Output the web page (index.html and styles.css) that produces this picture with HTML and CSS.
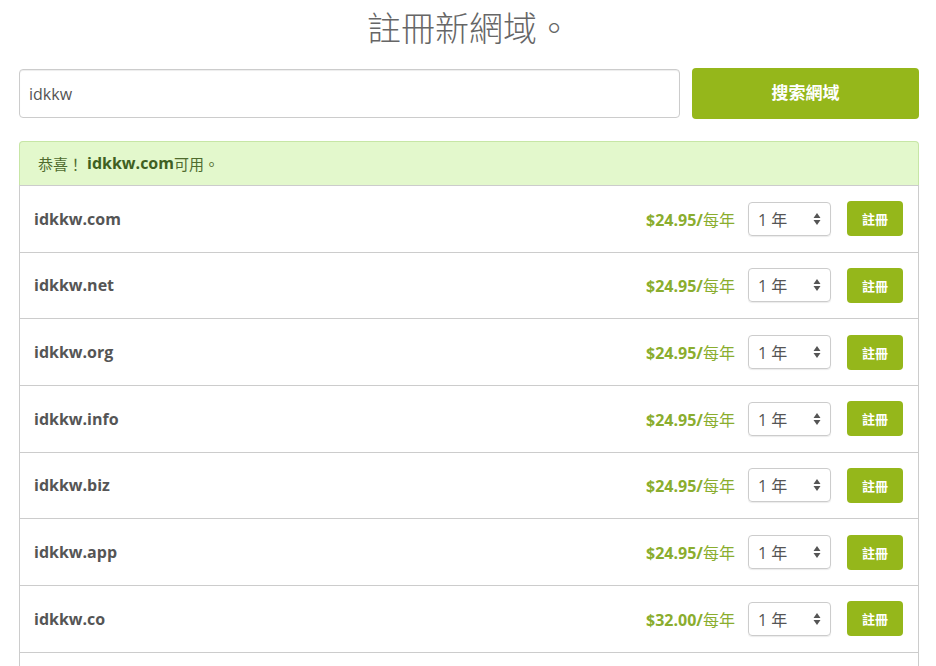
FILE: index.html
```html
<!DOCTYPE html>
<html lang="zh-Hant">
  <head>
    <meta charset="UTF-8" />
    <meta name="viewport" content="width=device-width, initial-scale=1.0" />
    <title>註冊新網域</title>
    <link rel="stylesheet" href="styles.css">
  </head>
  <body>
    <div class="container">
      <h1>註冊新網域。</h1>

      <form class="search-form">
        <input class="search-input" type="text" value="idkkw" aria-label="domain" />
        <button class="search-button" type="button">搜索網域</button>
      </form>

      <div class="alert">恭喜！ <strong>idkkw.com</strong>可用。</div>

      <div class="domain-list">
        <div class="domain-item">
          <span class="domain-name">idkkw.com</span>
          <span class="price"><b>$24.95/</b>每年</span>
          <div class="year-select"><span>1 年</span><svg viewBox="0 0 8 14" width="8" height="14"><path d="M4 1 L7.5 6 H0.5 Z M4 13 L7.5 8 H0.5 Z" fill="#555"/></svg></div>
          <button class="register-button">註冊</button>
        </div>
        <div class="domain-item">
          <span class="domain-name">idkkw.net</span>
          <span class="price"><b>$24.95/</b>每年</span>
          <div class="year-select"><span>1 年</span><svg viewBox="0 0 8 14" width="8" height="14"><path d="M4 1 L7.5 6 H0.5 Z M4 13 L7.5 8 H0.5 Z" fill="#555"/></svg></div>
          <button class="register-button">註冊</button>
        </div>
        <div class="domain-item">
          <span class="domain-name">idkkw.org</span>
          <span class="price"><b>$24.95/</b>每年</span>
          <div class="year-select"><span>1 年</span><svg viewBox="0 0 8 14" width="8" height="14"><path d="M4 1 L7.5 6 H0.5 Z M4 13 L7.5 8 H0.5 Z" fill="#555"/></svg></div>
          <button class="register-button">註冊</button>
        </div>
        <div class="domain-item">
          <span class="domain-name">idkkw.info</span>
          <span class="price"><b>$24.95/</b>每年</span>
          <div class="year-select"><span>1 年</span><svg viewBox="0 0 8 14" width="8" height="14"><path d="M4 1 L7.5 6 H0.5 Z M4 13 L7.5 8 H0.5 Z" fill="#555"/></svg></div>
          <button class="register-button">註冊</button>
        </div>
        <div class="domain-item">
          <span class="domain-name">idkkw.biz</span>
          <span class="price"><b>$24.95/</b>每年</span>
          <div class="year-select"><span>1 年</span><svg viewBox="0 0 8 14" width="8" height="14"><path d="M4 1 L7.5 6 H0.5 Z M4 13 L7.5 8 H0.5 Z" fill="#555"/></svg></div>
          <button class="register-button">註冊</button>
        </div>
        <div class="domain-item">
          <span class="domain-name">idkkw.app</span>
          <span class="price"><b>$24.95/</b>每年</span>
          <div class="year-select"><span>1 年</span><svg viewBox="0 0 8 14" width="8" height="14"><path d="M4 1 L7.5 6 H0.5 Z M4 13 L7.5 8 H0.5 Z" fill="#555"/></svg></div>
          <button class="register-button">註冊</button>
        </div>
        <div class="domain-item">
          <span class="domain-name">idkkw.co</span>
          <span class="price"><b>$32.00/</b>每年</span>
          <div class="year-select"><span>1 年</span><svg viewBox="0 0 8 14" width="8" height="14"><path d="M4 1 L7.5 6 H0.5 Z M4 13 L7.5 8 H0.5 Z" fill="#555"/></svg></div>
          <button class="register-button">註冊</button>
        </div>
        <div class="domain-item domain-item-more"></div>
      </div>
    </div>
  </body>
</html>
```

FILE: styles.css
```css
body {
  margin: 0;
  background-color: #fff;
  color: #555;
  font-family: "Open Sans", "Noto Sans CJK TC", sans-serif;
  font-size: 14px;
  overflow: hidden;
}

.container {
  width: 900px;
  margin: 0 0 0 19px;
}

h1 {
  margin: 8px 0 19px;
  text-align: center;
  font-size: 34px;
  font-weight: 300;
  line-height: 41px;
  color: #666;
}

.search-form {
  display: flex;
  gap: 12px;
  align-items: center;
}

.search-input {
  flex: 1;
  height: 49px;
  box-sizing: border-box;
  padding: 0 9px;
  border: 1px solid #ccc;
  border-radius: 4px;
  box-shadow: inset 0 1px 1px rgba(0, 0, 0, 0.075);
  font-family: inherit;
  font-size: 16px;
  color: #555;
}

.search-button {
  width: 227px;
  height: 51px;
  padding: 0 0 4px;
  border: none;
  border-radius: 4px;
  background-color: #95b71b;
  color: #fff;
  font-family: inherit;
  font-size: 17px;
  font-weight: bold;
  cursor: pointer;
}

.alert {
  margin-top: 22px;
  height: 44px;
  box-sizing: border-box;
  padding: 0 18px 1px;
  display: flex;
  align-items: center;
  background-color: #e3f8cc;
  border: 1px solid #c7e6a6;
  border-bottom: none;
  border-radius: 4px 4px 0 0;
  color: #4f6b2e;
  font-size: 15px;
}

.alert strong {
  margin-left: 4px;
  color: #3f5f22;
  font-size: 16px;
}

.domain-list {
  border: 1px solid #ccc;
  border-bottom: none;
}

.domain-item {
  height: 66.67px;
  box-sizing: border-box;
  padding: 0 15px 0 14px;
  border-top: 1px solid #ccc;
  display: flex;
  align-items: center;
}

.domain-item:first-child {
  border-top: none;
  height: 65.67px;
}

.domain-name {
  flex: 1;
  font-size: 16px;
  font-weight: bold;
  color: #555;
}

.price {
  color: #8aad2e;
  font-size: 16px;
  margin-right: 13px;
}

.price b {
  font-weight: bold;
}

.year-select {
  width: 83px;
  height: 34px;
  box-sizing: border-box;
  padding: 0 9px;
  border: 1px solid #ccc;
  border-radius: 4px;
  box-shadow: 0 1px 1px rgba(0, 0, 0, 0.08);
  display: flex;
  align-items: center;
  justify-content: space-between;
  font-size: 16px;
  color: #555;
  margin-right: 16px;
}

.register-button {
  width: 56px;
  height: 35px;
  border: none;
  border-radius: 4px;
  background-color: #95b71b;
  color: #fff;
  font-family: inherit;
  font-size: 13px;
  font-weight: bold;
  cursor: pointer;
}
```
